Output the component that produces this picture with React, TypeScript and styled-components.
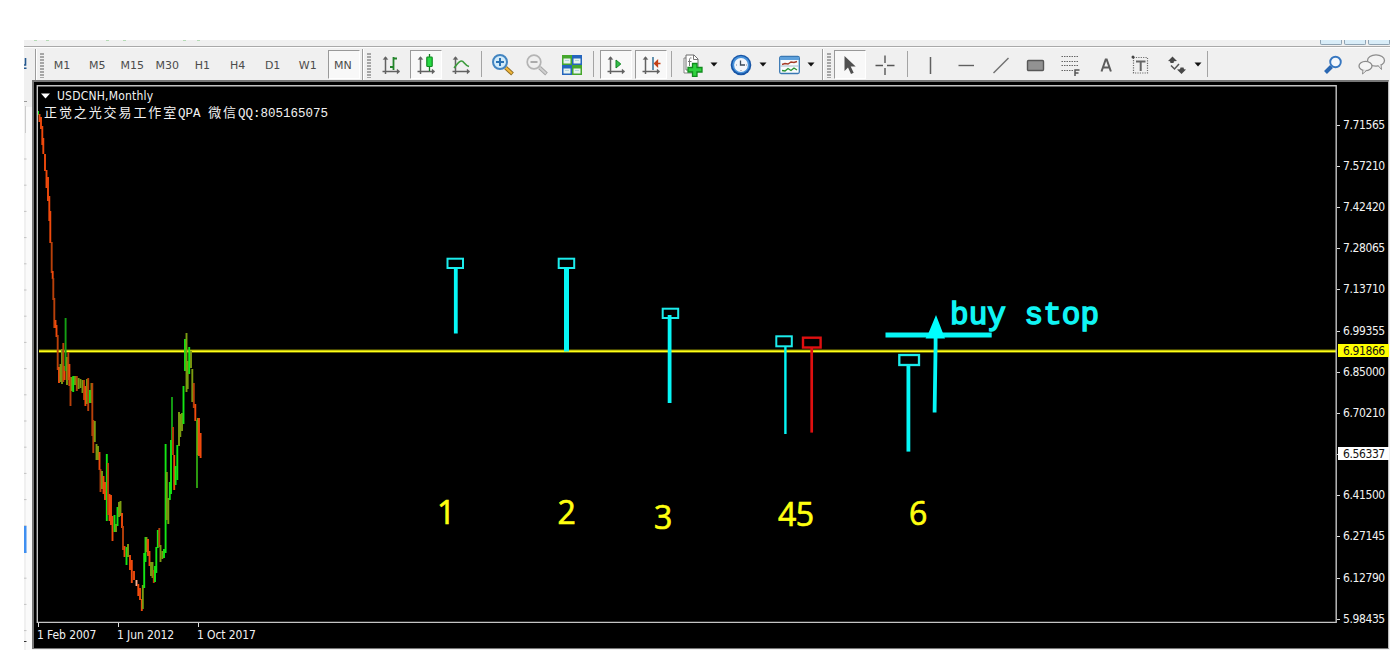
import React from 'react';
import styled, { createGlobalStyle, css } from 'styled-components';

const GlobalStyle = createGlobalStyle`
  * { box-sizing: border-box; }
  body { margin: 0; background: #fff; }
`;

const uiFont = '"DejaVu Sans Condensed", "DejaVu Sans", "Noto Sans", sans-serif';

const Page = styled.div`
  width: 1393px;
  height: 650px;
  padding: 40px 3px 0 24px;
  overflow: hidden;
  background: #fff;
  display: flex;
  flex-direction: column;
  font-family: ${uiFont};
`;

const MenuEdge = styled.div`
  height: 8px;
  flex: none;
  background: #f0f0f0;
  border-bottom: 1px solid #fdfdfd;
  box-shadow: inset 0 -1px 0 #a9a9a9;
  display: flex;
  justify-content: space-between;
`;

const MenuTraces = styled.div`
  display: flex;
  padding-left: 10px;
`;

const Trace = styled.i<{ $gap: number }>`
  width: 3px;
  height: 1px;
  margin-right: ${p => p.$gap}px;
  background: #b5dbb5;
`;

const WindowButtons = styled.div`
  display: flex;
  gap: 2px;
`;

const WindowButton = styled.i`
  width: 22px;
  height: 5px;
  background: #d9edf8;
  border: 1px solid #8fa3b3;
  border-top: 0;
  border-radius: 0 0 2px 2px;
`;

const Toolbar = styled.div`
  height: 32px;
  flex: none;
  display: flex;
  align-items: center;
  background: #f0f0f0;
`;

const Clipped = styled.div`
  width: 11px;
  height: 32px;
  display: flex;
  align-items: center;
`;

const Edge = styled.div`
  width: 3px;
  height: 31px;
  border-left: 1px solid #9c9c9c;
  box-shadow: inset 1px 0 0 #fff;
`;

const Grip = styled.div`
  width: 4px;
  height: 25px;
  margin: 2px 2px 0 2px;
  background: repeating-linear-gradient(#a6a6a6 0 1.5px, #f0f0f0 1.5px 3px);
`;

const Gap = styled.div<{ $w: number }>`
  width: ${p => p.$w}px;
  flex: none;
`;

const Separator = styled.div<{ $w?: number }>`
  width: ${p => p.$w ?? 8}px;
  flex: none;
  display: flex;
  justify-content: center;
  &::before {
    content: '';
    width: 1px;
    height: 26px;
    background: #a4a4a4;
  }
`;

const pressedStyle = css`
  background: #f8f8f8;
  border: 1px solid #fff;
  border-top-color: #999;
  border-left-color: #999;
`;

const Slot = styled.div<{ $w: number }>`
  width: ${p => p.$w}px;
  flex: none;
  display: flex;
  justify-content: center;
`;

const ToolButton = styled.div<{ $pressed?: boolean }>`
  width: 32px;
  height: 29px;
  display: flex;
  align-items: center;
  justify-content: center;
  margin-top: 1px;
  ${p => p.$pressed && pressedStyle}
  svg { display: block; flex: none; }
`;

const Period = styled(ToolButton)`
  font-family: "DejaVu Sans", sans-serif;
  font-size: 11px;
  color: #4c4c4c;
  padding: 2px 3px 0 0;
`;

const Spacer = styled.div`
  flex: 1;
`;

const Workspace = styled.div`
  flex: 1;
  min-height: 0;
  display: flex;
  background: #f0f0f0;
`;

const Ruler = styled.svg`
  display: block;
  width: 8px;
  height: 570px;
  flex: none;
`;

const ChartWindow = styled.div`
  width: 1357px;
  height: 569px;
  display: grid;
  grid-template-columns: 1303px 1fr;
  grid-template-rows: 541px 1fr;
  background: #000;
  border: 2px solid #777;
  border-right: 1px solid #bbb;
  border-bottom: 1px solid #777;
  color: #f2f2f2;
  font-size: 12px;
`;

const Plot = styled.div`
  position: relative;
`;

const PlotSvg = styled.svg`
  display: block;
`;

const Legend = styled.div`
  position: absolute;
  left: 7px;
  top: 6px;
`;

const SymbolRow = styled.div`
  display: flex;
  align-items: center;
  height: 15px;
  gap: 7px;
  letter-spacing: 0.2px;
`;

const Studio = styled.div`
  padding-left: 3px;
  white-space: pre;
  font: 12.5px/17px "Liberation Mono", "Noto Sans CJK SC", monospace;
`;

const Han = styled.span`
  font-family: "Noto Sans CJK SC", sans-serif;
  font-size: 13px;
  letter-spacing: 1.9px;
`;

const PriceAxis = styled.div`
  position: relative;
  padding-top: 22.6px;
`;

const Price = styled.div`
  height: 41.18px;
  line-height: 41px;
  display: flex;
  align-items: center;
  gap: 3px;
  letter-spacing: -0.4px;
  &::before {
    content: '';
    width: 3px;
    height: 1px;
    background: #ddd;
  }
`;

const PriceTag = styled.div<{ $top: number; $bg: string }>`
  position: absolute;
  left: 1px;
  top: ${p => p.$top}px;
  width: 51px;
  height: 13px;
  padding-left: 5px;
  line-height: 14px;
  color: #111;
  background: ${p => p.$bg};
  letter-spacing: -0.4px;
`;

const TimeAxis = styled.div`
  grid-column: 1 / 3;
  display: flex;
  padding: 0 0 0 3px;
  line-height: 16px;
  letter-spacing: -0.1px;
`;

const TimeLabel = styled.div`
  width: 80px;
  white-space: nowrap;
  &::before {
    content: '';
    display: block;
    width: 1px;
    height: 4px;
    margin-left: 1px;
    background: #ddd;
  }
`;

const Icon = ({ children }: { children: React.ReactNode }) => (
  <svg width="24" height="24" viewBox="0 0 24 24" fill="none">{children}</svg>
);

const Axes = () => (
  <g stroke="#626262" strokeWidth="1.5">
    <path d="M6.5 4v17M3.5 18.5h16" />
    <path d="M4 6.5l2.500-3 2.500 3zM18 16l3 2.500-3 2.500z" fill="#626262" strokeWidth=".3" />
  </g>
);

const CaretSvg = styled.svg`
  flex: none;
`;

const Caret = () => (
  <CaretSvg width="8" height="5" viewBox="0 0 8 5">
    <path d="M.5.5h7L4 4.500z" fill="#111" />
  </CaretSvg>
);

const Tool = ({ w, pressed, children }: { w: number; pressed?: boolean; children: React.ReactNode }) => (
  <Slot $w={w}>
    <ToolButton $pressed={pressed}><Icon>{children}</Icon></ToolButton>
  </Slot>
);

const periods = ['M1', 'M5', 'M15', 'M30', 'H1', 'H4', 'D1', 'W1', 'MN'];

const O = '#f04a0c';
const D = '#b8400a';
const G = '#14e614';
const M = '#7c9c10';

type Bar = [x: number, top: number, bottom: number, color: string];

const bars: Bar[] = [
  [38, 111, 115, G], [39.5, 114, 122, O], [41, 117, 129, O], [42.3, 126, 145, O], [43.3, 138, 154, O],
  [45, 154, 171, O], [46.5, 170, 188, O], [48, 177, 201, O], [49.3, 196, 221, O], [50.3, 211, 243, O],
  [51.7, 242, 273, D], [52.7, 271, 279, O], [53.3, 278, 300, D], [54.3, 298, 328, D], [55.5, 320, 328, O], [56.5, 325, 337, O],
  [57.7, 335, 370, D], [59, 367, 383, O], [60.5, 364, 382, M], [62, 349, 384, M], [63.3, 343, 382, D],
  [64.6, 366, 380, O], [65.6, 318, 371, '#14a014'], [67, 357, 385, M], [68.3, 352, 380, D], [69.4, 364, 386, O],
  [70.5, 377, 406, D], [71.8, 377, 391, M], [73.2, 376, 392, G], [75, 376, 385, M], [76.8, 376, 391, D],
  [78.6, 378, 389, M], [80.5, 379, 388, M], [82.5, 380, 393, M], [84, 380, 400, D], [85.4, 386, 406, O],
  [87, 379, 404, M], [88.2, 378, 411, D], [90, 390, 403, G], [91.5, 383, 403, M], [92.3, 383, 436, D],
  [93.3, 420, 453, D], [94.8, 421, 442, M], [96.5, 444, 460, M], [98, 446, 460, M], [99.5, 452, 470, O],
  [100.5, 469, 492, D], [102, 471, 489, M], [103.5, 476, 494, O], [105, 482, 500, O], [106.8, 454, 521, G],
  [108, 463, 515, D], [109.5, 494, 521, O], [111, 495, 525, O], [112.5, 516, 541, O], [114.5, 515, 532, G],
  [116, 524, 532, M], [117.5, 507, 526, G], [119, 502, 517, M], [120.5, 501, 516, M], [122, 513, 528, O],
  [123, 526, 550, D], [124.5, 546, 557, O], [126.5, 547, 565, G], [128, 544, 557, M], [130, 555, 570, O],
  [131.8, 560, 583, O], [134, 571, 580, O], [136.5, 580, 586, '#ffb090'], [138.3, 584, 596, O], [140, 588, 600, O],
  [141.8, 599, 611, O], [142.8, 585, 609, M], [144.2, 553, 588, G], [145.5, 537, 562, G], [146.5, 537, 552, M],
  [148, 539, 556, O], [149.5, 551, 566, O], [151, 562, 576, M], [152.5, 562, 578, M], [153.8, 570, 583, D],
  [155, 566, 582, G], [156.3, 547, 573, G], [157.8, 530, 548, G], [159.3, 528, 547, D], [160.5, 545, 562, M],
  [162.3, 551, 559, M], [164, 549, 558, G], [165.6, 444, 553, G], [166.8, 472, 520, M], [168.3, 498, 524, M],
  [169.8, 482, 500, G], [171, 440, 494, G], [172, 397, 440, '#14a014'], [173, 427, 455, D], [174.2, 455, 490, O],
  [175.6, 466, 485, G], [177.3, 445, 480, G], [179, 412, 446, M], [180.3, 414, 437, M], [182, 413, 431, M],
  [183.5, 386, 424, G], [185, 339, 371, G], [186.5, 333, 392, M], [187.7, 361, 389, M], [189.2, 347, 374, G],
  [191, 351, 368, M], [192.3, 369, 402, M], [193.8, 383, 408, D], [195.3, 404, 421, O], [197, 420, 488, '#2ea010'],
  [197.8, 418, 455, M], [199, 418, 456, O], [200.6, 433, 458, O],
];

const Annotations = () => (
  <g>
    <g fill="none" stroke="#1cecec" strokeWidth="2">
      <rect x="447.5" y="258.7" width="15.5" height="9.3" />
      <rect x="558.7" y="258.7" width="15.5" height="9.3" />
      <rect x="662.7" y="308.7" width="15.5" height="9.3" />
      <rect x="776.3" y="336.3" width="15.5" height="10" />
      <rect x="899.3" y="355" width="19.7" height="10" strokeWidth="2.3" />
      <rect x="803" y="337.7" width="17.6" height="9.8" stroke="#df1010" strokeWidth="2.4" />
    </g>
    <g stroke="#06f6f6">
      <path d="M455.8 268v65.5" strokeWidth="3.8" />
      <path d="M566.5 268v83.5" strokeWidth="5" />
      <path d="M669.6 315v88" strokeWidth="3.8" />
      <path d="M785.4 347v87" strokeWidth="2.4" />
      <path d="M811.7 348v84.6" stroke="#df1010" strokeWidth="2.7" />
      <path d="M908.4 366v85.6" strokeWidth="3.8" />
      <path d="M885.5 334.9h106.2" strokeWidth="5" />
      <path d="M935.6 325v20L934.6 412.5" strokeWidth="3.8" />
    </g>
    <path d="M936 315L945 338.5H925.5L928.5 333z" fill="#00ffff" />
    <text x="950" y="323.500" fill="#10f4f4" stroke="#10f4f4" strokeWidth="1.5" fontFamily='"Liberation Mono", monospace' fontSize="31" textLength="149">buy stop</text>
    <g fill="#ffff10" stroke="#ffff10" strokeWidth=".7" fontFamily='"Open Sans", "Noto Sans", sans-serif' fontSize="32">
      <text x="437" y="524">1</text>
      <text x="557.500" y="524">2</text>
      <text x="654" y="528.500">3</text>
      <text x="778" y="525.500" textLength="36">45</text>
      <text x="909" y="525">6</text>
    </g>
  </g>
);

const prices = ['7.71565', '7.57210', '7.42420', '7.28065', '7.13710', '6.99355', '6.85000', '6.70210', '', '6.41500', '6.27145', '6.12790', '5.98435'];

const rulerTicks = Array.from({ length: 19 }, (_, i) => 79 + i * 26.2);

export default function App() {
  return (
    <>
      <GlobalStyle />
      <Page>
        <MenuEdge>
          <MenuTraces>
            {[9, 57, 14, 57, 11, 0].map((g, i) => <Trace key={i} $gap={g} />)}
          </MenuTraces>
          <WindowButtons><WindowButton /><WindowButton /><WindowButton /></WindowButtons>
        </MenuEdge>

        <Toolbar>
          <Clipped>
            <svg width="3" height="14" viewBox="0 0 3 14">
              <path d="M0 8h1.500V1M0 11.300h2.500" stroke="#24588f" strokeWidth="1.600" fill="none" />
            </svg>
          </Clipped>
          <Edge />
          <Grip />
          {periods.map(p => (
            <Slot key={p} $w={35.1}>
              <Period $pressed={p === 'MN'}>{p}</Period>
            </Slot>
          ))}
          <Gap $w={0.1} />
          <Edge />
          <Grip />
          <Gap $w={1} />

          <Tool w={34}>
            <Axes />
            <path d="M14.500 4v13M14.500 5.500h3.500M11 14h3.500" stroke="#23852b" strokeWidth="1.800" />
          </Tool>
          <Tool w={36} pressed>
            <Axes />
            <path d="M15.500 1v17" stroke="#137a1d" strokeWidth="1.300" />
            <rect x="12.800" y="4" width="5.400" height="9.500" rx=".8" fill="#27d943" stroke="#118a22" strokeWidth="1.200" />
          </Tool>
          <Tool w={34}>
            <Axes />
            <path d="M5 15c3-3 4.500-7 7.500-7 2.500 0 3.500 4.500 7.500 5.500" stroke="#3c9c3c" strokeWidth="1.600" />
          </Tool>
          <Separator />
          <Tool w={34}>
            <path d="M14.500 14.500l7 6.500" stroke="#8e6b20" strokeWidth="4" />
            <path d="M14.500 14.500l6.500 6" stroke="#f0b63c" strokeWidth="2.200" />
            <circle cx="9" cy="9" r="7" fill="#d2ebfa" stroke="#4385c1" strokeWidth="2" />
            <path d="M9 5v8M5 9h8" stroke="#2b73b5" strokeWidth="2" />
          </Tool>
          <Tool w={34}>
            <path d="M14.500 14.500l7 6.500" stroke="#a5a5a5" strokeWidth="3.800" />
            <path d="M14.500 14.500l6.500 6" stroke="#cfcfcf" strokeWidth="2" />
            <circle cx="9" cy="9" r="6.800" fill="#efefef" stroke="#b4b4b4" strokeWidth="1.700" />
            <path d="M5.500 9h7" stroke="#a3a3a3" strokeWidth="1.800" />
          </Tool>
          <Tool w={36}>
            <path d="M2 2h10v10H2z" fill="#45a72c" /><path d="M12 2h10v10h-10z" fill="#2465bd" />
            <path d="M2 12h10V22H2z" fill="#2465bd" /><path d="M12 12h10V22h-10z" fill="#45a72c" />
            <path d="M3.500 5.500h7v5h-7zM13.500 5.500h7v5h-7zM3.500 15.500h7v5h-7zM13.500 15.500h7v5h-7z" fill="#e7f3f0" />
            <path d="M5 7.500h4M15 7.500h4M5 17.500h4M15 17.500h4" stroke="#b4d5dc" />
          </Tool>
          <Separator />
          <Tool w={36} pressed>
            <Axes />
            <path d="M12 7l4.800 4-4.800 4z" fill="#32be48" stroke="#138525" />
          </Tool>
          <Tool w={34} pressed>
            <Axes />
            <path d="M14 4v13" stroke="#347299" strokeWidth="1.500" />
            <path d="M15.500 10.500h6M18.500 7.500l-3 3 3 3z" stroke="#c34117" fill="#c34117" strokeWidth="1.300" />
          </Tool>
          <Separator />
          <Tool w={35}>
            <path d="M3 5h9l4 4v11H3z" fill="#fff" stroke="#858585" />
            <path d="M5 2h8l4 4v11H5z" fill="#fff" stroke="#6f6f6f" />
            <path d="M12.500 2v4.500H17M10.500 5c-2-.5-2 1-2 2v6M7 8.500h3.500" stroke="#777" />
            <path d="M11.500 10.500h4.500v4h5v4.500h-5v4.500h-4.500V19h-4.500v-4.500h4.500z" fill="#2fd23e" stroke="#118b1e" strokeWidth="1.300" />
          </Tool>
          <Slot $w={6}><Caret /></Slot>
          <Gap $w={6} />
          <Tool w={36}>
            <circle cx="12" cy="12" r="10.300" fill="#1755a6" />
            <circle cx="12" cy="11.700" r="8.700" fill="#4892da" />
            <circle cx="12" cy="12" r="6.900" fill="#f3f6fa" />
            <path d="M11.500 7.500V12h4.500" stroke="#3d4b5a" strokeWidth="1.300" />
            <path d="M7 12h1M12 17v1M17 12h1" stroke="#889" />
          </Tool>
          <Gap $w={1} />
          <Slot $w={6}><Caret /></Slot>
          <Gap $w={5} />
          <Tool w={36}>
            <rect x="2.700" y="3.500" width="19.600" height="17" rx="1.500" fill="#f8fbfd" stroke="#3978b3" strokeWidth="1.300" />
            <path d="M3 4h19v3H3z" fill="#5da0db" />
            <path d="M5 11.500l3-1 3 .5 3-2 3 .5 3-1" stroke="#a63b27" strokeWidth="1.400" />
            <path d="M3.500 13h18" stroke="#a8bccb" />
            <path d="M5 17.500l3 .5 3-2.500 3 2 3-2.500 3 2" stroke="#299332" strokeWidth="1.400" />
          </Tool>
          <Gap $w={1} />
          <Slot $w={6}><Caret /></Slot>
          <Gap $w={8} />
          <Edge />
          <Grip />

          <Tool w={34} pressed>
            <path d="M6.500 3v15l3.500-3.500 3 6.500 2.700-1.200-3-6.300h5z" fill="#505050" />
          </Tool>
          <Tool w={36}>
            <path d="M12 2.500v7.500M12 15v7M2.500 12.500H10M14 12.500h7.500" stroke="#565656" strokeWidth="1.400" />
          </Tool>
          <Separator $w={10} />
          <Tool w={36}><path d="M11.500 4v17" stroke="#606060" strokeWidth="1.500" /></Tool>
          <Tool w={34}><path d="M4.500 12.500H20" stroke="#606060" strokeWidth="1.400" /></Tool>
          <Tool w={36}><path d="M4.500 20L19.500 5" stroke="#707070" strokeWidth="1.400" /></Tool>
          <Tool w={34}>
            <rect x="3.500" y="7.500" width="16" height="10" rx="1" fill="#929292" stroke="#575757" strokeWidth="1.400" />
          </Tool>
          <Tool w={36}>
            <path d="M2.500 3.500h17.500M2.500 8.500h17.500M2.500 12.500h17.500M2.500 17.500h12" stroke="#666" strokeWidth="1.200" strokeDasharray="1.500 1" />
            <path d="M16 23v-6h4.500M16 20h3.500" stroke="#555" strokeWidth="1.500" />
          </Tool>
          <Tool w={34}>
            <path d="M7.500 18.500l4.200-12h1l4.200 12M9 14.500h6.500" stroke="#5d5d5d" strokeWidth="2" />
          </Tool>
          <Tool w={36}>
            <rect x="4.500" y="4.500" width="14" height="15.500" stroke="#6d6d6d" strokeWidth="1.200" strokeDasharray="1.200 1.200" />
            <path d="M7 8.500h9.500M11.700 8.500V18" stroke="#666" strokeWidth="2" />
            <circle cx="4" cy="4" r="1.500" fill="#444" />
          </Tool>
          <Tool w={36}>
            <path d="M7.500 3.500L12 8l-3 .3-.5 1.700h-3L5 8.300 3 8z" fill="#484848" />
            <path d="M16.500 21l-4.500-4.500 3-.3.500-1.700h3l.5 1.700 2 .3z" fill="#484848" />
            <path d="M6 12.500l3.500 3.500 4.500-5" stroke="#555" strokeWidth="1.500" />
          </Tool>
          <Slot $w={6}><Caret /></Slot>
          <Separator $w={14} />
          <Spacer />
          <Tool w={34}>
            <path d="M9.500 13.500l-6 6" stroke="#2a67b2" strokeWidth="4" />
            <circle cx="13.500" cy="9" r="5.300" fill="#f4f8fc" stroke="#3777c0" strokeWidth="1.900" />
          </Tool>
          <Gap $w={7} />
          <svg width="28" height="22" viewBox="0 0 28 22" fill="none">
            <ellipse cx="18" cy="7.500" rx="8.500" ry="5.700" fill="#f3f3f3" stroke="#8c8c8c" strokeWidth="1.300" />
            <path d="M20 12.500l3.500 4-.5-5" fill="#f3f3f3" stroke="#8c8c8c" />
            <ellipse cx="7.500" cy="13" rx="6.500" ry="4.700" fill="#f6f6f6" stroke="#8c8c8c" strokeWidth="1.300" />
            <path d="M5 17l-.5 4 4-3.500" fill="#f6f6f6" stroke="#8c8c8c" />
          </svg>
          <Gap $w={4} />
        </Toolbar>

        <Workspace>
          <Ruler viewBox="0 0 8 570">
            <path d="M2 27h6v543H2z" fill="#fafafa" />
            <path d="M0 21.500h3" stroke="#999" />
            <path d="M1.500 26v27" stroke="#ccc" />
            {rulerTicks.map(y => <path key={y} d={`M0 ${y}h2.500`} stroke="#c2c2c2" />)}
            <path d="M0 446h2.500v27H0z" fill="#3f8ff0" />
            <path d="M0 561.500h2.500" stroke="#333" />
          </Ruler>
          <ChartWindow>
            <Plot>
              <PlotSvg width="1303" height="541" viewBox="34 82 1303 541">
                <path d="M39 351.200H1336" stroke="#8a8a00" strokeWidth="3.200" />
                <path d="M39 351.200H1336" stroke="#ffff18" strokeWidth="1.600" />
                {bars.map(([x, top, bottom, color], i) => (
                  <path key={i} d={`M${x} ${top}V${bottom}`} stroke={color} strokeWidth="1.900" />
                ))}
                <path d="M37.300 622.500V85.700H1336.200V622.500z" fill="none" stroke="#c4c4c4" strokeWidth="1.400" />
                <Annotations />
              </PlotSvg>
              <Legend>
                <SymbolRow>
                  <svg width="9" height="6" viewBox="0 0 9 6"><path d="M0 .5h9L4.500 5.500z" fill="#fff" /></svg>
                  <span>USDCNH,Monthly</span>
                </SymbolRow>
                <Studio><Han>正觉之光交易工作室</Han>QPA <Han>微信</Han>QQ:805165075</Studio>
              </Legend>
            </Plot>
            <PriceAxis>
              {prices.map((p, i) => <Price key={i}>{p}</Price>)}
              <PriceTag $top={262} $bg="#ffff00">6.91866</PriceTag>
              <PriceTag $top={365} $bg="#ffffff">6.56337</PriceTag>
            </PriceAxis>
            <TimeAxis>
              <TimeLabel>1 Feb 2007</TimeLabel>
              <TimeLabel>1 Jun 2012</TimeLabel>
              <TimeLabel>1 Oct 2017</TimeLabel>
            </TimeAxis>
          </ChartWindow>
        </Workspace>
      </Page>
    </>
  );
}
